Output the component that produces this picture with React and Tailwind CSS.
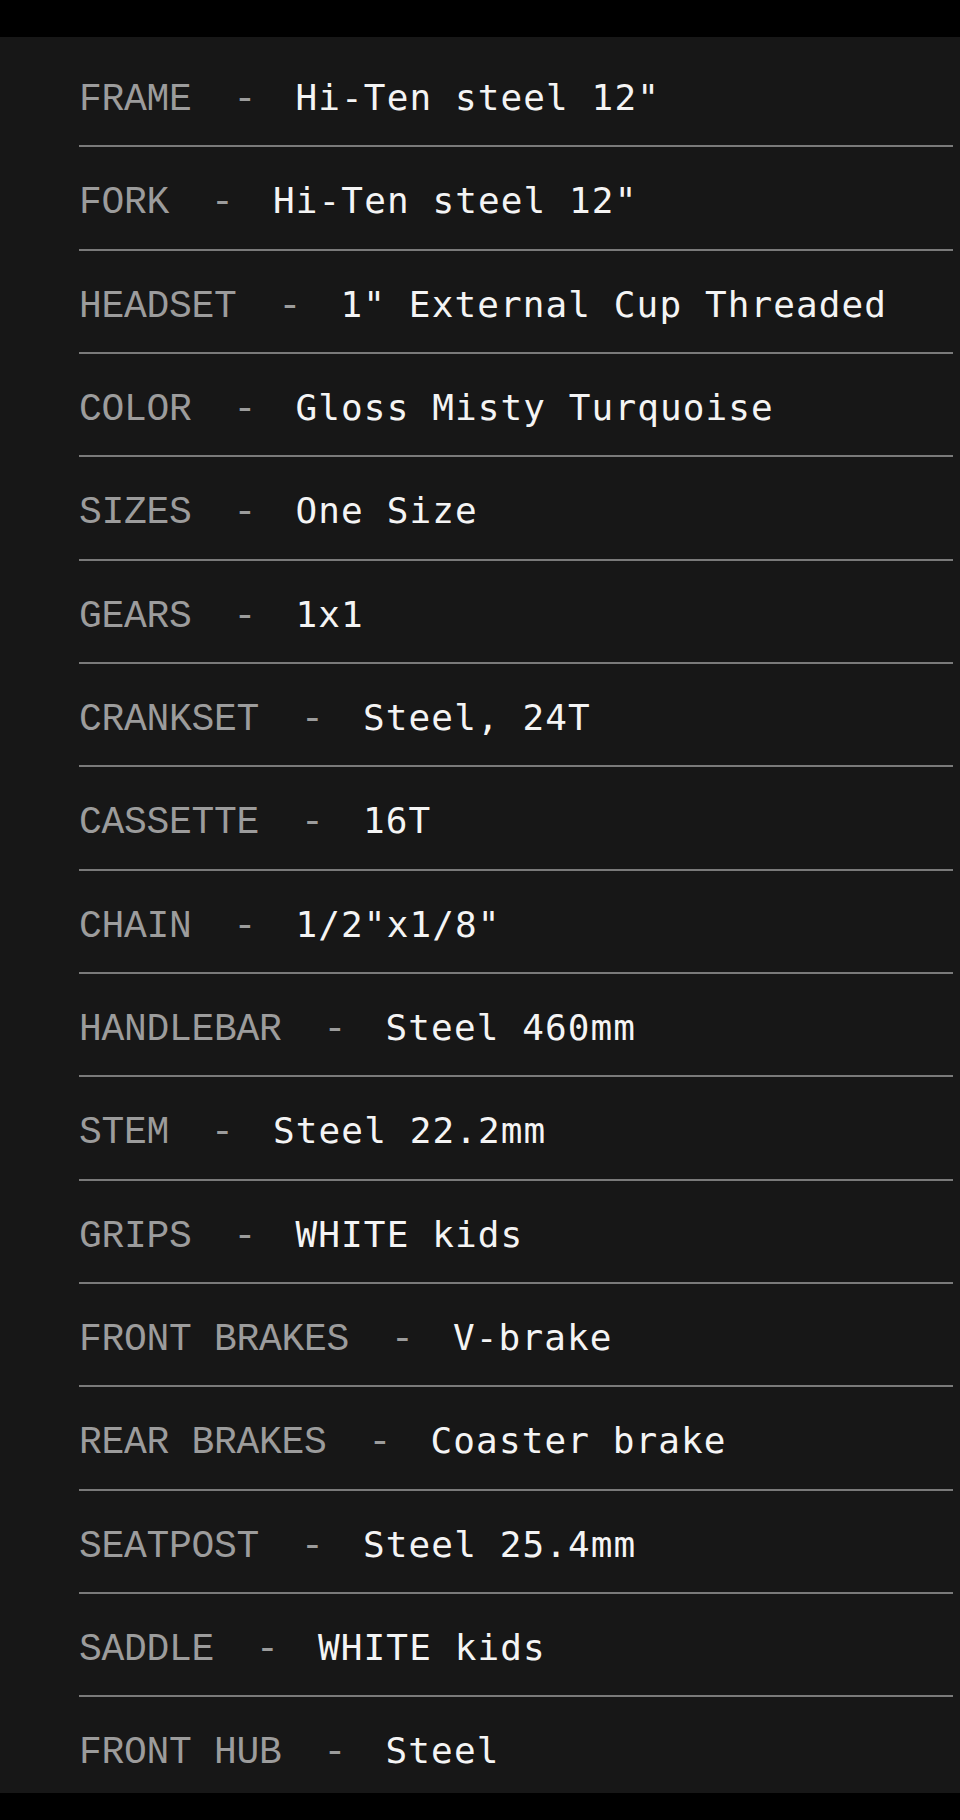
import React from 'react';

const specs = [
  { label: 'FRAME', value: 'Hi-Ten steel 12"' },
  { label: 'FORK', value: 'Hi-Ten steel 12"' },
  { label: 'HEADSET', value: '1" External Cup Threaded' },
  { label: 'COLOR', value: 'Gloss Misty Turquoise' },
  { label: 'SIZES', value: 'One Size' },
  { label: 'GEARS', value: '1x1' },
  { label: 'CRANKSET', value: 'Steel, 24T' },
  { label: 'CASSETTE', value: '16T' },
  { label: 'CHAIN', value: '1/2"x1/8"' },
  { label: 'HANDLEBAR', value: 'Steel 460mm' },
  { label: 'STEM', value: 'Steel 22.2mm' },
  { label: 'GRIPS', value: 'WHITE kids' },
  { label: 'FRONT BRAKES', value: 'V-brake' },
  { label: 'REAR BRAKES', value: 'Coaster brake' },
  { label: 'SEATPOST', value: 'Steel 25.4mm' },
  { label: 'SADDLE', value: 'WHITE kids' },
  { label: 'FRONT HUB', value: 'Steel' },
];

const SpecRow = ({ label, value, last }) => (
  <div
    className={`flex items-baseline whitespace-pre pt-[35px] ${
      last ? 'h-[96px]' : 'h-[103.33px] border-b-2 border-[#7a7a7a]'
    }`}
  >
    <span className="font-['Liberation_Mono',monospace] text-[38px] leading-[38px] tracking-[-0.3px] text-[#9c9c9c]">
      {label}
    </span>
    <span className="ml-[42px] mr-[40px] font-['Liberation_Mono',monospace] text-[38px] leading-[38px] tracking-[-0.8px] text-[#9c9c9c]">
      -
    </span>
    <span className="font-['DejaVu_Sans_Mono',monospace] text-[36px] leading-[38px] tracking-[1.1px] text-[#f4f4f4]">
      {value}
    </span>
  </div>
);

export default function App() {
  return (
    <div className="w-[960px] min-h-[1820px] bg-black">
      <div className="h-[37px] bg-black" />
      <div className="bg-[#171717] pt-[7px] pl-[79px] pr-[7px]">
        {specs.map((s, i) => (
          <SpecRow key={s.label} {...s} last={i === specs.length - 1} />
        ))}
      </div>
    </div>
  );
}
